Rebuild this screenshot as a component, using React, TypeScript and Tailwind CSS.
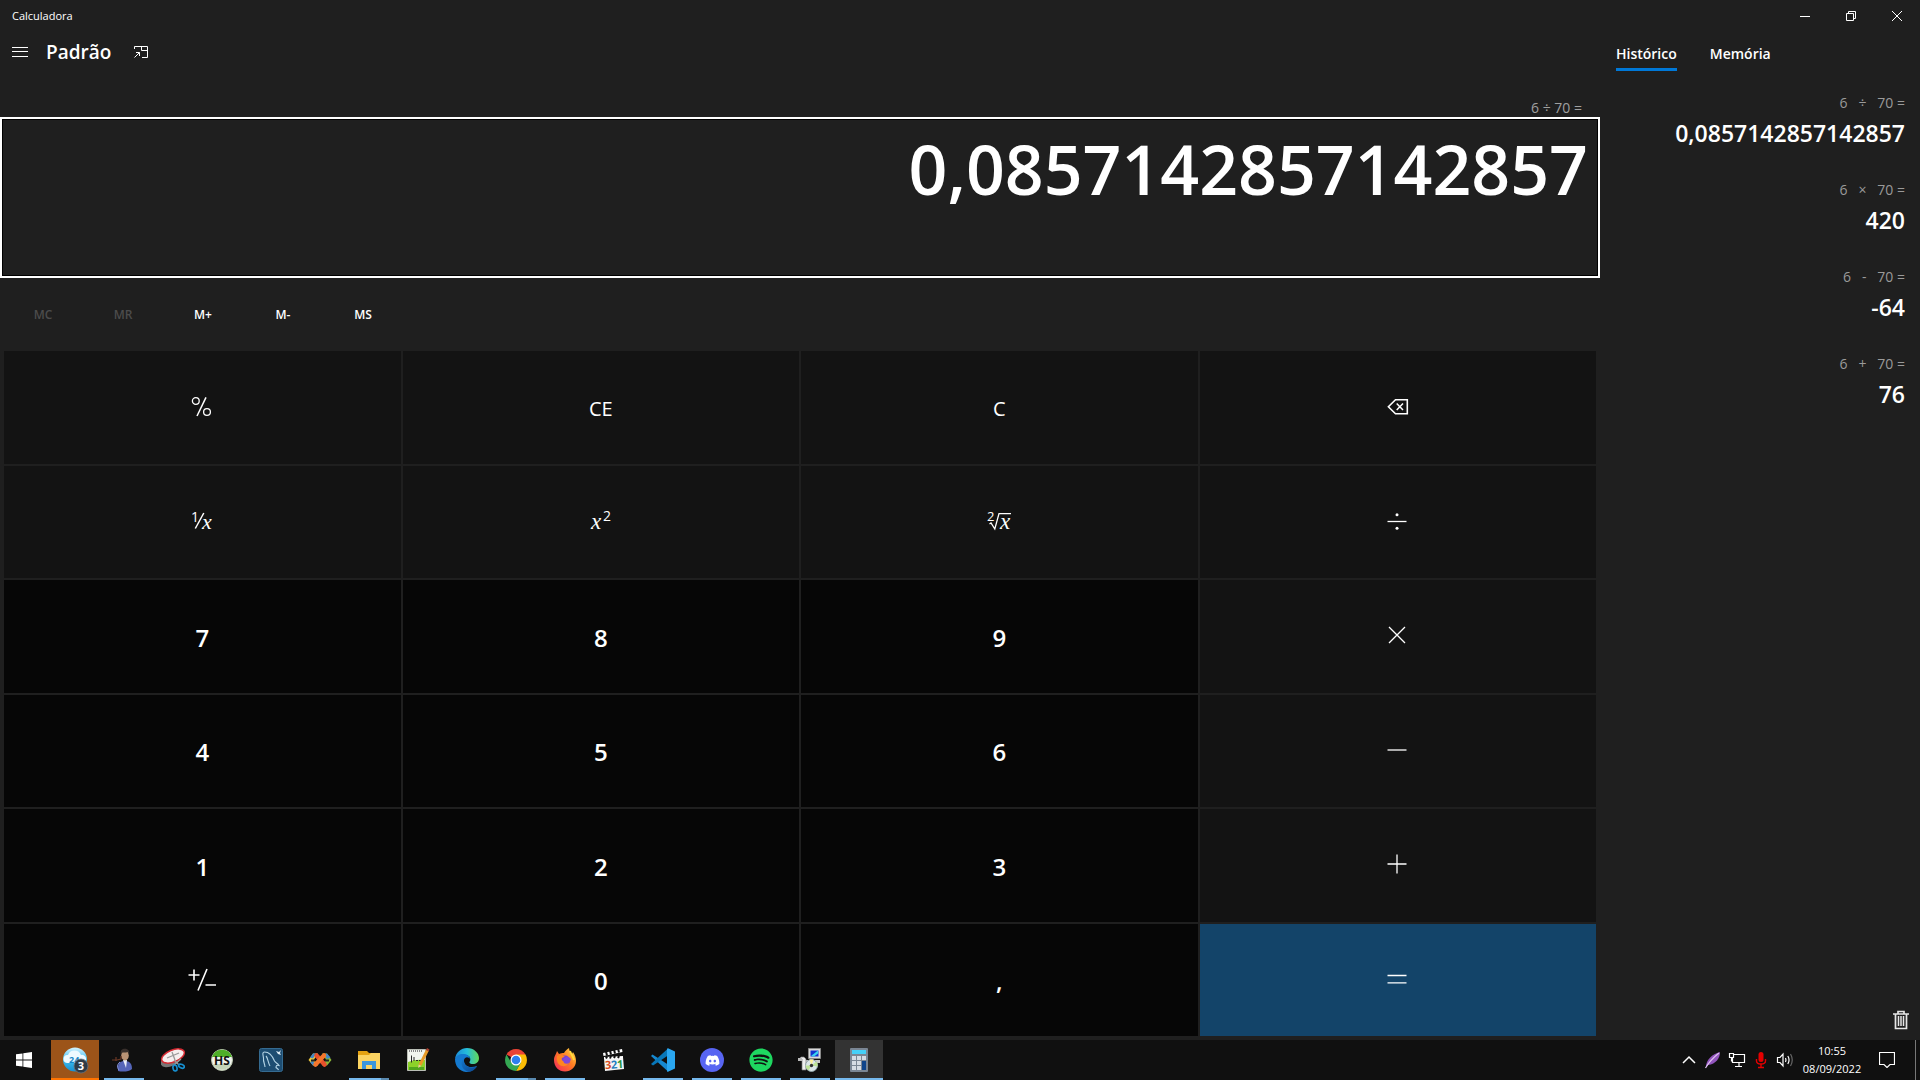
import type { ReactNode } from "react";
import { FaDiscord, FaSpotify } from "react-icons/fa";

const serif = '"Liberation Serif", serif';
const sans = '"Open Sans", sans-serif';

function Glyph({ children }: { children: ReactNode }) {
  return (
    <svg className="overflow-visible" width="32" height="32" viewBox="-4 -4 32 32" fill="none" stroke="#fff" strokeWidth="1.3" aria-hidden="true">
      {children}
    </svg>
  );
}

const percent = (
  <Glyph>
    <circle cx="5.8" cy="6" r="3.4" />
    <circle cx="17" cy="17" r="3.4" />
    <path d="M16 2.3 7 21" strokeWidth="1.5" />
  </Glyph>
);
const reciprocal = (
  <Glyph>
    <path d="M13.8 3 5.3 18.5" strokeWidth="1.5" />
    <g fill="#fff" stroke="none">
      <text x="1" y="12" fontSize="14" fontFamily={sans}>1</text>
      <text x="12" y="18.5" fontSize="22" fontStyle="italic" fontFamily={serif}>x</text>
    </g>
  </Glyph>
);
const square = (
  <Glyph>
    <g fill="#fff" stroke="none">
      <text x="2" y="19" fontSize="23" fontStyle="italic" fontFamily={serif}>x</text>
      <text x="14" y="11" fontSize="14" fontFamily={sans}>2</text>
    </g>
  </Glyph>
);
const root = (
  <Glyph>
    <path d="M2.5 14 4 13l3.8 6L12 3.7h12" />
    <g fill="#fff" stroke="none">
      <text x="0" y="11" fontSize="13" fontFamily={sans}>2</text>
      <text x="13" y="19" fontSize="23" fontStyle="italic" fontFamily={serif}>x</text>
    </g>
  </Glyph>
);
const backspace = (
  <Glyph>
    <path d="M9.500 4.800h11.800v14H9.500L2.400 11.800z" strokeWidth="1.600" />
    <path d="m10.700 8.500 6.300 6.600M17 8.500l-6.300 6.600" strokeWidth="1.500" />
  </Glyph>
);
const divide = (
  <Glyph>
    <path d="M1.500 11.500h19" />
    <g fill="#fff" stroke="none">
      <circle cx="11" cy="4.800" r="1.500" />
      <circle cx="11" cy="18.200" r="1.500" />
    </g>
  </Glyph>
);
const times = (
  <Glyph>
    <path d="m3 3 16 16M19 3 3 19" />
  </Glyph>
);
const minus = (
  <Glyph>
    <path d="M1.500 11h19" />
  </Glyph>
);
const plus = (
  <Glyph>
    <path d="M1.500 11h19M11 1.500v19" />
  </Glyph>
);
const equals = (
  <Glyph>
    <path d="M1.500 7.500h19M1.500 14.800h19" />
  </Glyph>
);
const negate = (
  <svg width="30" height="24" viewBox="0 0 30 24" fill="none" stroke="#fff" strokeWidth="1.6" aria-hidden="true">
    <path d="M1.5 7h11M7 1.500v11M20 1 11 22.500M18.500 17h10.500" />
  </svg>
);

type Key = { label: string; face: ReactNode; tone: "op" | "num" | "eq" };
const op = (label: string, face: ReactNode): Key => ({ label, face, tone: "op" });
const num = (label: string, face: ReactNode = label): Key => ({ label, face, tone: "num" });

const keys: Key[] = [
  op("Porcentagem", percent), op("CE", "CE"), op("C", "C"), op("Backspace", backspace),
  op("Inverso", reciprocal), op("Quadrado", square), op("Raiz quadrada", root), op("Dividir", divide),
  num("7"), num("8"), num("9"), op("Multiplicar", times),
  num("4"), num("5"), num("6"), op("Subtrair", minus),
  num("1"), num("2"), num("3"), op("Somar", plus),
  num("Positivo negativo", negate), num("0"), num(","), { label: "Igual", face: equals, tone: "eq" },
];

const tones = {
  op: "bg-[#131313] text-xl",
  num: "bg-[#060606] text-2xl font-semibold",
  eq: "bg-[#134469]",
};

const memory = [
  { name: "MC", off: true },
  { name: "MR", off: true },
  { name: "M+", off: false },
  { name: "M-", off: false },
  { name: "MS", off: false },
];

const history = [
  { expr: "6   ÷   70 =", value: "0,0857142857142857" },
  { expr: "6   ×   70 =", value: "420" },
  { expr: "6   -   70 =", value: "-64" },
  { expr: "6   +   70 =", value: "76" },
];

function TitleBar() {
  return (
    <header className="flex h-8 items-center justify-between">
      <h1 className="pl-3 text-[11px]">Calculadora</h1>
      <div className="flex h-full">
        <button aria-label="Minimizar" className="grid w-[46px] place-items-center">
          <svg width="10" height="10" stroke="#fff" fill="none"><path d="M0 5.5h10" /></svg>
        </button>
        <button aria-label="Restaurar" className="grid w-[46px] place-items-center">
          <svg width="10" height="10" stroke="#fff" fill="none"><path d="M.5 2.5h7v7h-7zM2.5 2.5v-2h7v7h-2" /></svg>
        </button>
        <button aria-label="Fechar" className="grid w-[46px] place-items-center">
          <svg width="10" height="10" stroke="#fff" fill="none"><path d="m0 0 10 10M10 0 0 10" /></svg>
        </button>
      </div>
    </header>
  );
}

function Calculator() {
  return (
    <main className="flex min-w-0 flex-1 flex-col">
      <div className="flex h-10 items-center pl-3">
        <button aria-label="Abrir navegação">
          <svg className="block" width="16" height="10" stroke="#fff"><path d="M0 .5h16M0 4.5h16M0 9.5h16" /></svg>
        </button>
        <h2 className="pl-[18px] text-[19px] font-semibold">Padrão</h2>
        <button aria-label="Manter na parte superior" className="ml-[22px]">
          <svg className="block" width="16" height="14" stroke="#fff" fill="none">
            <path d="M1.5 4V1.5h13v11H9M8.5 1.5v4h6M1.5 12.5 6.5 7.5M3 7.5h3.5V11" />
          </svg>
        </button>
      </div>
      <p className="mt-6 h-[21px] pr-[18px] text-right text-sm leading-6 text-[#a0a0a0]">6 ÷ 70 =</p>
      <output className="block h-[161px] border-2 border-white pr-2.5 text-right text-[68px] leading-[100px] font-semibold shadow-[inset_0_0_0_1px_#000]">
        0,0857142857142857
      </output>
      <div className="flex h-[73px] items-center pl-[3px]">
        {memory.map((m) => (
          <button
            key={m.name}
            disabled={m.off}
            className="w-20 text-center text-xs font-semibold disabled:text-[#4c4c4c]"
          >
            {m.name}
          </button>
        ))}
      </div>
      <div className="grid flex-1 auto-rows-fr grid-cols-4 gap-0.5 px-1 pb-1">
        {keys.map((k) => (
          <button key={k.label} aria-label={k.label} className={`flex items-center justify-center ${tones[k.tone]}`}>
            {typeof k.face === "string" ? <span className="pt-[3px]">{k.face}</span> : k.face}
          </button>
        ))}
      </div>
    </main>
  );
}

function HistoryPanel() {
  return (
    <aside className="flex w-80 flex-col">
      <nav className="flex gap-[33px] pt-2 pl-4 text-sm font-semibold" role="tablist">
        <button role="tab" aria-selected="true" className="h-[31px] border-b-3 border-[#0078d7]">Histórico</button>
        <button role="tab" aria-selected="false" className="h-[31px] border-b-3 border-transparent">Memória</button>
      </nav>
      <ul className="flex flex-1 flex-col pt-5 pr-[15px] text-right">
        {history.map((h) => (
          <li key={h.expr} className="h-[87px]">
            <p className="text-sm leading-6 whitespace-pre text-[#9a9a9a]">{h.expr}</p>
            <p className="text-[23px] leading-9 font-semibold">{h.value}</p>
          </li>
        ))}
      </ul>
      <button aria-label="Limpar histórico" className="mr-[11px] mb-2.5 self-end">
        <svg className="block" width="16" height="20" fill="none" stroke="#e6e6e6">
          <path d="M0 4h16M5 3.5v-2h6v2M2.5 4v14.5h11V4" strokeWidth="1.7" />
          <path d="M5.5 6v10M8 6v10M10.5 6v10" strokeWidth="1.5" />
        </svg>
      </button>
    </aside>
  );
}

function Art({ children }: { children: ReactNode }) {
  return <svg width="24" height="24" viewBox="0 0 24 24" fill="none" aria-hidden="true">{children}</svg>;
}

type App = { name: string; icon: ReactNode; state?: "open" | "many" | "alert" | "active" };
const apps: App[] = [
  {
    name: "Agenda", state: "alert",
    icon: (
      <svg width="28" height="28" viewBox="-1 0 28 28" aria-hidden="true">
        <defs><linearGradient id="sky" x2="0" y2="1"><stop stopColor="#d6f3ff" /><stop offset=".5" stopColor="#41c0f0" /><stop offset="1" stopColor="#168fd0" /></linearGradient></defs>
        <circle cx="13" cy="13.5" r="12" fill="url(#sky)" />
        <path d="M5 17a4 4 0 0 1 1-8 7 7 0 0 1 13 0 4 4 0 0 1 2 8z" fill="#eefaff" />
        <text x="7" y="17" fontSize="9" fontWeight="700" fill="#1686c8" fontFamily={sans}>24</text>
        <circle cx="19" cy="20" r="7" fill="#2e3b47" stroke="#667582" strokeWidth=".8" />
        <text x="15.8" y="24" fontSize="11" fontWeight="700" fill="#fff" fontFamily={sans}>3</text>
      </svg>
    ),
  },
  {
    name: "Atendente", state: "open",
    icon: (
      <Art>
        <path d="M6 23c-.5-8 2-10 7-10s7 3 7 8c-3 3-10 3-14 2z" fill="#5565b8" />
        <path d="M11 12h4l-1 8z" fill="#e8edf8" />
        <ellipse cx="13" cy="7.5" rx="3.8" ry="5" fill="#b99375" />
        <path d="M8.800 7C8 2 10 .8 13 .8S18 3 17 7l-1-3c-3 1-5 0-6.500 1z" fill="#39302c" />
        <path d="M9 8v3l-4 1H0M4 9v4" stroke="#6b3825" strokeWidth="1.200" />
        <path d="M8 14c-3 2-3 6-1 8" stroke="#8794dc" />
      </Art>
    ),
  },
  {
    name: "Ferramenta de Captura",
    icon: (
      <Art>
        <ellipse cx="10" cy="12" rx="11" ry="6" transform="rotate(-25 10 12)" fill="#777" />
        <ellipse cx="12" cy="8" rx="12" ry="6" transform="rotate(-22 12 8)" fill="#f6eeee" stroke="#d52a32" strokeWidth="1.500" />
        <path d="m6 10 12-5M11 4l3 8M13 12l5 5M20 11l-7 6" stroke="#999" strokeWidth="1.300" />
        <ellipse cx="14" cy="20" rx="2" ry="3" stroke="#168fd0" strokeWidth="1.700" transform="rotate(-12 14 20)" />
        <ellipse cx="20.500" cy="18" rx="3" ry="1.800" stroke="#168fd0" strokeWidth="1.700" transform="rotate(25 20 18)" />
      </Art>
    ),
  },
  {
    name: "HeidiSQL",
    icon: (
      <Art>
        <circle cx="12" cy="12" r="10.500" fill="#f2f4ee" stroke="#b8c4ad" />
        <path d="M2 9a10.500 10.500 0 0 1 20 0z" fill="#4fae28" />
        <path d="M3 16a10 10 0 0 0 18 0z" fill="#c4d3b8" />
        <text x="12" y="16.500" textAnchor="middle" fontSize="12" fontWeight="700" fill="#111" fontFamily={sans}>HS</text>
      </Art>
    ),
  },
  {
    name: "MySQL Workbench",
    icon: (
      <Art>
        <rect x=".5" y=".5" width="23" height="23" rx="2" fill="#1d4d72" stroke="#356b91" />
        <path d="M6 19C6 16 4 14 4.500 10 4 7 3 4 5.500 4c5 0 8 4 10 9 1 2 3 2 4.500 4.500-2-.5-3 0-3 2 1 1 2 1 2.500 2.500M7 8c2 2 2 7 4 10" stroke="#b4d4e6" strokeWidth="1.100" />
        <path d="m17 3 3 1 2-2-1 3 1 2-3-1" fill="#dceaf3" />
      </Art>
    ),
  },
  {
    name: "Conexões",
    icon: (
      <Art>
        <path d="M5 5.500h5l-4 6 4 6H5L.5 12z" fill="#e9c43c" />
        <path d="M19 5.500h-5l4 6-4 6h5l4.500-5.500z" fill="#8bb638" />
        <path d="m2 9.500 3-4h3l-3 5zM16 6l3-.5 3.500 4L19 11zM2 14l3 3.500h3L5 13z" fill="#3f88c7" />
        <path d="M3 11.500h4v2H3zM17 11.500h4v2h-4z" fill="#222" />
        <path d="m8.500 7.500 8 9" stroke="#e8502c" strokeWidth="4.500" strokeLinecap="round" />
        <path d="m16 7.500-8.500 9" stroke="#f3752c" strokeWidth="4.500" strokeLinecap="round" />
      </Art>
    ),
  },
  {
    name: "Explorador de Arquivos", state: "many",
    icon: (
      <Art>
        <path d="M1 3h9l2 2h10v4H1z" fill="#e5a312" />
        <path d="M1 7h11l2-2h9v16H1z" fill="#fcd462" />
        <path d="M5 21v-8h14v8h-4v-4H9v4z" fill="#3b96dc" />
      </Art>
    ),
  },
  {
    name: "Notepad++",
    icon: (
      <Art>
        <path d="M1.500 1.500h18v21h-18z" fill="#f1f4ed" stroke="#b9bdb5" />
        <path d="M2 14q7-3 17-2v10H2z" fill="#8dd229" /><path d="M3 19h15v3H3z" fill="#51a51d" />
        <path d="M3 3h14" stroke="#888" strokeDasharray="1 1" strokeWidth="2" />
        <path d="M5.500 7.500v7M8 9v4M10 12.500h2M13 12.500h2" stroke="#292929" />
        <path d="M21.500 2 14 17" stroke="#e99a27" strokeWidth="3" /><path d="m21 0 2.500 1.500-1 2L20 2z" fill="#a83f30" /><path d="m12.700 16.500-.5 3.500 3-2z" fill="#eccba1" />
      </Art>
    ),
  },
  {
    name: "Microsoft Edge",
    icon: (
      <Art>
        <defs>
          <linearGradient id="edgeA" x1="0" x2="1"><stop stopColor="#1b8ad8" /><stop offset=".5" stopColor="#25bddb" /><stop offset="1" stopColor="#62d957" /></linearGradient>
          <linearGradient id="edgeB" x2="1" y2="1"><stop stopColor="#1479cf" /><stop offset="1" stopColor="#0c448c" /></linearGradient>
        </defs>
        <path d="M0 11C1 4 6 0 12 0c7 0 12 5 12 10 0 4-3 6-6 6-4 0-4-2-3-3 1-2 0-6-5-6-5 0-9 2-10 4z" fill="url(#edgeA)" />
        <path d="M0 11c1-3 4-5 8-5 4 0 7 2 7 5-1-2-5-3-6 1-1 5 5 9 13 6-3 5-8 6-11 6C4 23 0 18 0 11z" fill="#1479cf" />
        <path d="M9 10c-5 4-2 13 5 13.800 3-.2 6-2.300 8-5.300-8 3-14-1-13-8.500z" fill="url(#edgeB)" />
      </Art>
    ),
  },
  {
    name: "Google Chrome", state: "many",
    icon: (
      <Art>
        <path d="M12 12 2.500 6.500A11 11 0 0 1 21.500 6.500z" fill="#ea4335" />
        <path d="M21.500 6.500A11 11 0 0 1 12 23l5-9-5-7.500z" fill="#fbbc05" />
        <path d="M2.500 6.500A11 11 0 0 0 12 23l5-8.500-5-2.500-4.500 3z" fill="#34a853" />
        <circle cx="12" cy="12" r="5.500" fill="#fff" /><circle cx="12" cy="12" r="4.300" fill="#2d7ff0" />
      </Art>
    ),
  },
  {
    name: "Firefox", state: "open",
    icon: (
      <Art>
        <defs><linearGradient id="fox" x1="1" x2="0" y2="1"><stop stopColor="#ffe34a" /><stop offset=".45" stopColor="#ff7a22" /><stop offset="1" stopColor="#f32460" /></linearGradient></defs>
        <path d="M1 12c0-4 2-5 3-9l2 3c2-1 3-1 5-1 1-2 3-4 5-5 0 3 2 4 3 6l1-2c2 3 3 6 3 9 0 6-5 10.500-11 10.500S1 19 1 12z" fill="url(#fox)" />
        <circle cx="12" cy="12.500" r="5" fill="#7440d8" />
        <path d="M4 8c3-2 6-1 8 1-2 0-4 1-3 3 2 3 6 1 7-2 2 5-2 9-7 8-4-1-6-5-5-10z" fill="#ff8520" />
        <path d="M10 11c3-2 4-4 8 0-1 4-4 6-7 4z" fill="#8048d8" />
        <path d="M17 3c1 3 3 5 4 9" stroke="#ffd93d" strokeWidth="2" />
      </Art>
    ),
  },
  {
    name: "Media Player Classic",
    icon: (
      <Art>
        <path d="m2 10 19-1 1 12-19 2z" fill="#f5f5f5" />
        <path d="m1 5 19-4 .5 3-19 4z" fill="#fff" />
        <path d="m4 3.500 1 4m3-5 1 4m3-5 1 4m3-5 1 4" stroke="#111" strokeWidth="2" />
        <path d="m2 9 19-1v2L2 11z" fill="#fff" /><path d="m5 8.500-1 2m5-2.500-1 2.500m5-2.500-1 2m5-2-1 2" stroke="#111" strokeWidth="2" />
        <g fontSize="11" fontWeight="700" fontFamily={sans} transform="rotate(-4 12 16)">
          <text x="3" y="20.500" fill="#d84b20">3</text><text x="9" y="20.500" fill="#247dc0">2</text><text x="15" y="20.500" fill="#289440">1</text>
        </g>
      </Art>
    ),
  },
  {
    name: "Visual Studio Code", state: "open",
    icon: (
      <Art>
        <path d="M1.500 6.500 0 8l17 15.500 1.500-6z" fill="#1689d1" />
        <path d="M0 16 17 .5l1.500 6L2 17.500z" fill="#0877b9" />
        <path d="M17 .2 24 3.500v17l-7 3.300c-1 0-1-.5-1-1V1.500c0-.5 0-1 1-1.300z" fill="#2aa7f1" />
      </Art>
    ),
  },
  {
    name: "Discord", state: "open",
    icon: <span className="grid size-6 place-items-center rounded-full bg-[#5865f2]"><FaDiscord size={15} color="#fff" /></span>,
  },
  { name: "Spotify", state: "open", icon: <FaSpotify size={24} color="#1ed760" /> },
  {
    name: "Instalador", state: "open",
    icon: (
      <Art>
        <path d="M10.500.5h12v10h-12z" fill="#d9d9d9" stroke="#888" /><path d="M12.500 2.500h8v6h-8z" fill="#1234d0" /><path d="m13 8 7-5.500v3L16 8.500z" fill="#38d4ee" />
        <path d="M8 12h14v3H8z" fill="#c8c8c8" />
        <path d="M1 11 3 9h3l2 2v11H4V11z" fill="#eee" stroke="#777" strokeWidth=".7" /><path d="M0 10h4v3H0z" fill="#bbb" />
        <circle cx="13.500" cy="17.500" r="6" fill="#dce6e8" stroke="#8fa0a5" /><path d="m13.500 17.500 5-4a6 6 0 0 1 1 5zM13.500 17.500l-3 5a6 6 0 0 1-3-5z" fill="#bfe398" /><path d="m13.500 17.500-2-6h4z" fill="#fff29a" />
        <circle cx="13.500" cy="17.500" r="1.700" fill="#333" />
      </Art>
    ),
  },
  {
    name: "Calculadora", state: "active",
    icon: (
      <Art>
        <rect x="3" y="0" width="18" height="24" rx="1" fill="#7a8694" />
        <path d="M5 2h14v4H5z" fill="#45d0f8" />
        <path d="M5 8h4v4H5zM10 8h4v4h-4zM15 8h4v4h-4zM5 13h4v4H5zM10 13h4v4h-4zM5 18h4v4H5zM10 18h4v4h-4z" fill="#d5dce4" />
        <path d="M15 13h4v9h-4z" fill="#10458b" />
      </Art>
    ),
  },
];

function TaskButton({ app }: { app: App }) {
  const bg = app.state === "alert" ? "bg-[#9c5419]" : app.state === "active" ? "bg-[#333333]" : "";
  return (
    <button aria-label={app.name} className={`flex w-12 flex-col items-center ${bg}`}>
      <span className="grid flex-1 place-items-center pt-0.5">{app.icon}</span>
      {app.state === "alert" && <span className="h-0.5 w-full bg-[#ff7300]" />}
      {app.state === "active" && <span className="h-0.5 w-full bg-[#76b9ed]" />}
      {app.state === "open" && <span className="h-0.5 w-10 bg-[#76b9ed]" />}
      {app.state === "many" && (
        <span className="flex h-0.5 w-10">
          <span className="flex-1 bg-[#76b9ed]" />
          <span className="w-2 bg-[#5a8ab0]" />
        </span>
      )}
      {!app.state && <span className="h-0.5" />}
    </button>
  );
}

function TrayButton({ label, children }: { label: string; children: ReactNode }) {
  return (
    <button aria-label={label} className="grid w-6 place-items-center">
      <svg width="18" height="18" viewBox="0 0 18 18" fill="none" stroke="#fff" strokeWidth="1.200">{children}</svg>
    </button>
  );
}

function Taskbar() {
  return (
    <footer className="flex h-10 bg-[#101010]">
      <button aria-label="Iniciar" className="mr-[3px] grid w-12 place-items-center">
        <svg width="16" height="16" fill="#fff"><path d="M0 2.300 6.500 1.400v6.200H0zM7.300 1.300 16 0v7.600H7.300zM0 8.400h6.500v6.200L0 13.700zM7.300 8.400H16V16l-8.700-1.300z" /></svg>
      </button>
      <div className="flex flex-1 gap-px">
        {apps.map((a) => <TaskButton key={a.name} app={a} />)}
      </div>
      <div className="flex">
        <TrayButton label="Mostrar ícones ocultos"><path d="m3 12 6-6 6 6" strokeWidth="1.500" /></TrayButton>
        <TrayButton label="Pena">
          <path d="M2 16C2 9 8 3 16 1c0 6-4 12-12 13z" fill="#9254bd" stroke="none" />
          <path d="M1.500 17C5 11 10 6 15 2" stroke="#dec1ef" />
        </TrayButton>
        <TrayButton label="Rede"><path d="M6 3.500h10.500v8H4.500V7M11 11.500v4M7 15.500h7M1.500 2.500h4v4h-4zM3.500 6.500v4" /></TrayButton>
        <TrayButton label="Microfone">
          <rect x="6.500" y="1" width="5" height="10" rx="2.500" fill="#e60000" stroke="none" />
          <path d="M4.500 8v2q0 3 4.500 3t4.500-3V8M9 13v3.500M6 16.500h6" stroke="#e60000" strokeWidth="1.400" />
        </TrayButton>
        <TrayButton label="Volume">
          <path d="M1.500 6.500H4l3-3.500v12l-3-3.500H1.500z" />
          <path d="M9.500 7q1 2 0 4M11.800 5q2.500 4 0 8" />
          <path d="M14.500 3q3.500 6 0 12" stroke="#666" />
        </TrayButton>
        <button className="w-[70px] text-center text-[11px] leading-[18px]">
          <time className="block">10:55</time>
          <time className="block">08/09/2022</time>
        </button>
        <button aria-label="Notificações" className="mr-2 grid w-10 place-items-center">
          <svg width="16" height="16" fill="none" stroke="#fff"><path d="M.5.500h15v12H11l-3 3-3-3H.5z" strokeWidth="1.200" /></svg>
        </button>
        <button aria-label="Mostrar área de trabalho" className="w-[5px] border-l border-[#777777]" />
      </div>
    </footer>
  );
}

export default function App() {
  return (
    <div className="flex min-h-screen flex-col bg-[#1f1f1f] font-['Open_Sans',sans-serif] text-white">
      <TitleBar />
      <div className="flex flex-1">
        <Calculator />
        <HistoryPanel />
      </div>
      <Taskbar />
    </div>
  );
}
